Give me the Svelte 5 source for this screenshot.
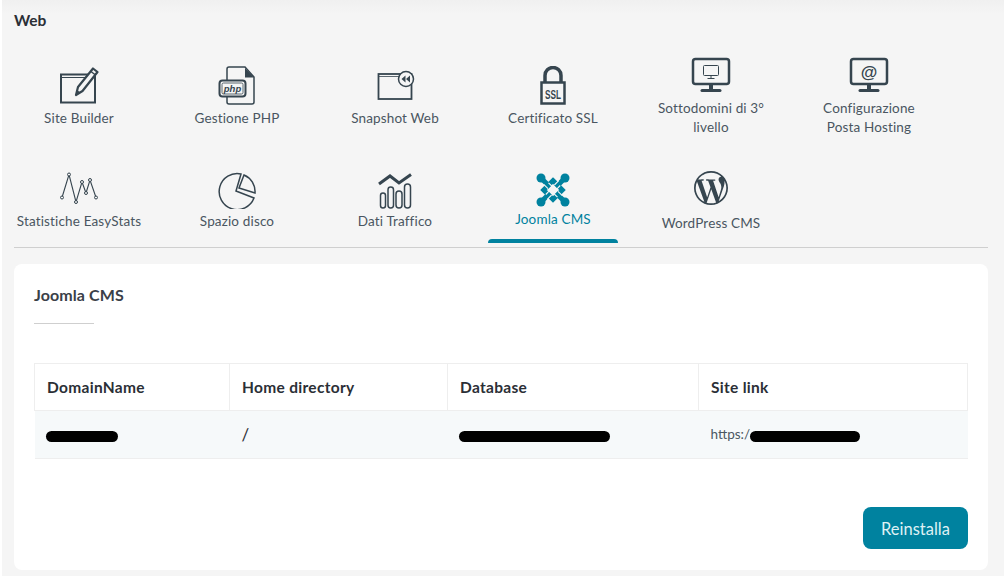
<script>
  const domains = [{ name: 72, home: '/', db: 151, link: 110 }];
  const turns = [0, 90, 180, 270];
</script>

<div class="page">
  <h1>Web</h1>

  <nav class="tabs">
    <a class="tab" href="#a">
      <svg width="40" height="40" viewBox="0 0 40 40" fill="none">
        <rect x="2" y="8.500" width="34" height="28" stroke="#36454f" stroke-width="2" />
        <path d="M3 11.500h30" stroke="#36454f" />
        <path d="M17 29l2-8L34 2.500 38.500 6 23.500 25z" fill="#f5f5f5" stroke="#36454f" stroke-width="2.200" stroke-linejoin="round" />
        <path d="M32 5.500l4.500 3.500" stroke="#36454f" stroke-width="1.500" />
        <path d="M17 29l1-5 3.500 2.500z" fill="#36454f" />
      </svg>
      <span>Site Builder</span>
    </a>

    <a class="tab" href="#b">
      <svg width="40" height="40" viewBox="0 0 40 40" fill="none">
        <path d="M10 14V3a2 2 0 0 1 2-2h16l9 10v25a2 2 0 0 1-2 2H12a2 2 0 0 1-2-2v-5" stroke="#36454f" stroke-width="1.500" />
        <path d="M28 2l9 9.500h-9z" fill="#36454f" />
        <rect x="2.500" y="14.500" width="26" height="16" rx="3" fill="#f5f5f5" stroke="#36454f" stroke-width="2" />
        <rect x="5" y="17" width="21" height="11" rx="1.500" stroke="#36454f" stroke-width=".8" />
        <text x="15.500" y="25.500" class="php">php</text>
      </svg>
      <span>Gestione PHP</span>
    </a>

    <a class="tab" href="#c">
      <svg width="40" height="40" viewBox="0 0 40 40" fill="none">
        <rect x="3.500" y="8" width="33" height="25" stroke="#36454f" stroke-width="1.800" />
        <path d="M4 10.500h27" stroke="#36454f" stroke-width=".8" />
        <circle cx="31" cy="13" r="7.500" fill="#f5f5f5" stroke="#36454f" stroke-width="1.500" />
        <path d="M30.500 9.500v7L26.500 13zM35 9.500v7L31 13z" fill="#36454f" />
      </svg>
      <span>Snapshot Web</span>
    </a>

    <a class="tab" href="#d">
      <svg width="40" height="40" viewBox="0 0 40 40" fill="none">
        <path d="M12 17V10a8 8 0 0 1 16 0v7" stroke="#36454f" stroke-width="3.500" transform="translate(0 -.500)" />
        <rect x="8.500" y="16.500" width="23" height="21" fill="#f5f5f5" stroke="#36454f" stroke-width="2.500" />
        <text x="20" y="33" class="ssl" textLength="16" lengthAdjust="spacingAndGlyphs">SSL</text>
      </svg>
      <span>Certificato SSL</span>
    </a>

    <a class="tab two-line" href="#e">
      <svg width="40" height="36" viewBox="0 0 40 36" fill="none">
        <rect x="2" y="2" width="36" height="25" rx="2.500" stroke="#36454f" stroke-width="2.500" />
        <path d="M20 27v5" stroke="#36454f" stroke-width="4" />
        <path d="M11 33.500h18" stroke="#36454f" stroke-width="3" stroke-linecap="round" />
        <rect x="12.500" y="8.500" width="15" height="10" rx="1" stroke="#36454f" />
        <path d="M20 18.500v2.500M16.500 21.500h7" stroke="#36454f" />
      </svg>
      <span>Sottodomini di 3°<br />livello</span>
    </a>

    <a class="tab two-line" href="#f">
      <svg width="40" height="36" viewBox="0 0 40 36" fill="none">
        <rect x="2" y="2" width="36" height="25" rx="2.500" stroke="#36454f" stroke-width="2.500" />
        <path d="M20 27v5" stroke="#36454f" stroke-width="4" />
        <path d="M11 33.500h18" stroke="#36454f" stroke-width="3" stroke-linecap="round" />
        <text x="20" y="20.500" class="at">@</text>
      </svg>
      <span>Configurazione<br />Posta Hosting</span>
    </a>

    <a class="tab stats" href="#g">
      <svg width="40" height="36" viewBox="0 0 40 36" fill="none">
        <path d="M3 26.500L10 3.500 17 31 23 11 27 22 31 9 37 26.500" stroke="#36454f" stroke-width="1.100" />
        <g fill="#f5f5f5" stroke="#36454f">
          <circle cx="3" cy="26.500" r="1.500" />
          <circle cx="10" cy="3.500" r="1.500" />
          <circle cx="17" cy="31" r="1.500" />
          <circle cx="23" cy="11" r="1.500" />
          <circle cx="27" cy="22" r="1.500" />
          <circle cx="31" cy="9" r="1.500" />
          <circle cx="37" cy="26.500" r="1.500" />
        </g>
      </svg>
      <span>Statistiche EasyStats</span>
    </a>

    <a class="tab" href="#h">
      <svg width="40" height="38" viewBox="0 0 40 38" fill="none" stroke="#36454f" stroke-width="1.500">
        <path d="M19 20L24 3A18 18 0 1 0 37 27z" />
        <path d="M22 17L27 4A18 18 0 0 1 38 22z" />
      </svg>
      <span>Spazio disco</span>
    </a>

    <a class="tab" href="#i">
      <svg width="40" height="38" viewBox="0 0 40 38" fill="none" stroke="#36454f">
        <path d="M4 13L15 5 24 12 36 3.500" stroke-width="3" />
        <rect x="5.500" y="22" width="5" height="15" rx="2.500" stroke-width="1.500" />
        <rect x="13" y="16" width="5.500" height="21" rx="2.700" stroke-width="1.500" />
        <rect x="21" y="20" width="6" height="17" rx="3" stroke-width="1.500" />
        <rect x="29.500" y="13" width="6" height="24" rx="3" stroke-width="1.500" />
      </svg>
      <span>Dati Traffico</span>
    </a>

    <a class="tab active" href="#j">
      <svg width="34" height="34" viewBox="0 0 34 34" fill="none">
        <path d="M17 7.500L26.500 17 17 26.500 7.500 17z" stroke="#00829f" stroke-width="4.600" />
        {#each turns as t}
          <g transform="rotate({t} 17 17)">
            <path d="M5 5L14 14" stroke="#00829f" stroke-width="5" />
            <circle cx="5" cy="5" r="4.500" fill="#00829f" />
            <path d="M7.700 11.300L12 15.600M12.500 9.800L15.800 13" stroke="#f5f5f5" stroke-width="1.100" />
          </g>
        {/each}
      </svg>
      <span>Joomla CMS</span>
    </a>

    <a class="tab wp" href="#k">
      <svg width="34" height="34" viewBox="0 0 24 24" fill="#36454f">
        <path d="M21.469 6.825c.84 1.537 1.318 3.3 1.318 5.175 0 3.979-2.156 7.456-5.363 9.325l3.295-9.527c.615-1.54.82-2.771.82-3.864 0-.405-.026-.78-.07-1.11m-7.981.105c.647-.03 1.232-.105 1.232-.105.582-.075.514-.93-.067-.899 0 0-1.755.135-2.88.135-1.064 0-2.85-.15-2.85-.15-.585-.03-.661.855-.075.885 0 0 .54.061 1.125.09l1.68 4.605-2.37 7.08L5.354 6.9c.649-.03 1.234-.1 1.234-.1.585-.075.516-.93-.065-.896 0 0-1.746.138-2.874.138-.2 0-.438-.008-.69-.015C4.911 3.15 8.235 1.215 12 1.215c2.809 0 5.365 1.072 7.286 2.833-.046-.003-.091-.009-.141-.009-1.06 0-1.812.923-1.812 1.914 0 .89.513 1.643 1.06 2.531.411.72.89 1.643.89 2.977 0 .915-.354 1.994-.821 3.479l-1.075 3.585-3.9-11.61.001.014zM12 22.784c-1.059 0-2.081-.153-3.048-.437l3.237-9.406 3.315 9.087c.024.053.05.101.078.149-1.12.393-2.325.609-3.582.609M1.211 12c0-1.564.336-3.05.935-4.39L7.29 21.709C3.694 19.96 1.212 16.271 1.211 12M12 0C5.385 0 0 5.385 0 12s5.385 12 12 12 12-5.385 12-12S18.615 0 12 0" />
      </svg>
      <span>WordPress CMS</span>
    </a>
  </nav>

  <section class="card">
    <h2>Joomla CMS</h2>
    <div class="rule"></div>

    <table>
      <thead>
        <tr>
          <th>DomainName</th>
          <th>Home directory</th>
          <th>Database</th>
          <th>Site link</th>
        </tr>
      </thead>
      <tbody>
        {#each domains as d}
          <tr>
            <td><i class="hidden first" style="width: {d.name}px"></i></td>
            <td class="home">{d.home}</td>
            <td><i class="hidden first" style="width: {d.db}px"></i></td>
            <td>https:/<i class="hidden" style="width: {d.link}px"></i></td>
          </tr>
        {/each}
      </tbody>
    </table>

    <div class="actions">
      <button type="button">Reinstalla</button>
    </div>
  </section>
</div>

<style>
  :global(body) {
    background: #fff;
  }

  .page {
    box-sizing: border-box;
    height: 576px;
    margin-left: 2px;
    padding: 11px 16px 0 12px;
    overflow: hidden;
    background: linear-gradient(#f0f0f0, #f5f5f5 14px);
    font-family: Lato, "Open Sans", sans-serif;
    color: #4a5661;
  }

  h1 {
    margin: 0;
    font-size: 15.500px;
    line-height: 18px;
    font-weight: 700;
    color: #2b2f36;
  }

  .tabs {
    display: flex;
    flex-wrap: wrap;
    gap: 19px 28px;
    margin-top: 25px;
    padding-bottom: 4px;
    border-bottom: 1px solid #cfcfcf;
  }

  .tab {
    position: relative;
    display: flex;
    flex-direction: column;
    align-items: center;
    justify-content: center;
    width: 130px;
    height: 85px;
    color: inherit;
    text-decoration: none;
    text-align: center;
    font-size: 13.500px;
    line-height: 19px;
    letter-spacing: .15px;
  }

  .tab svg {
    display: block;
    margin-bottom: 3px;
  }

  .two-line svg {
    margin-bottom: 6px;
  }

  .stats svg {
    margin-bottom: 5px;
  }

  .wp {
    padding-top: 2px;
    box-sizing: border-box;
  }

  .wp svg {
    margin-bottom: 9px;
  }

  .active {
    color: #00829f;
  }

  .active::after {
    content: "";
    position: absolute;
    left: 0;
    right: 0;
    bottom: 0;
    height: 4px;
    border-radius: 4px 4px 0 0;
    background: #00829f;
  }

  .php {
    font: italic 700 9.500px "Liberation Sans", sans-serif;
    letter-spacing: 0;
    fill: #36454f;
    text-anchor: middle;
  }

  .ssl {
    font: 700 12px "Liberation Sans", sans-serif;
    letter-spacing: 0;
    fill: #36454f;
    text-anchor: middle;
  }

  .at {
    font: 700 17px "Liberation Sans", sans-serif;
    letter-spacing: 0;
    fill: #36454f;
    text-anchor: middle;
  }

  .card {
    box-sizing: border-box;
    height: 306px;
    margin-top: 16px;
    padding: 22px 20px 0;
    border-radius: 8px;
    background: #fff;
  }

  h2 {
    margin: 0;
    font-size: 16px;
    line-height: 18px;
    font-weight: 700;
    letter-spacing: .1px;
    color: #3a4048;
  }

  .rule {
    width: 60px;
    height: 1px;
    margin-top: 19px;
    background: #cfcfcf;
  }

  table {
    width: 934px;
    margin-top: 39px;
    border-collapse: collapse;
    table-layout: fixed;
    font-size: 13.500px;
  }

  th {
    box-sizing: border-box;
    height: 47px;
    padding: 0 12px;
    border: 1px solid #eeeeee;
    text-align: left;
    font-size: 15.500px;
    font-weight: 700;
    letter-spacing: .3px;
    color: #2b2f36;
  }

  th:nth-child(1) { width: 195px; }
  th:nth-child(2) { width: 218px; }
  th:nth-child(3) { width: 251px; }

  td {
    box-sizing: border-box;
    height: 48px;
    padding: 0 12px 2px;
    border-bottom: 1px solid #eeeeee;
    background: #f6f9fa;
  }

  .home {
    padding-bottom: 0;
    font-size: 17px;
    color: #2b2f36;
  }

  .hidden {
    display: inline-block;
    height: 11px;
    border-radius: 6px;
    background: #000;
    vertical-align: -3px;
  }

  .first {
    margin-left: -1px;
  }

  .actions {
    display: flex;
    justify-content: flex-end;
    margin-top: 48px;
  }

  button {
    width: 105px;
    height: 42px;
    padding-top: 2px;
    border: 0;
    border-radius: 8px;
    background: #00829f;
    color: #dff1f5;
    font: inherit;
    font-size: 16.500px;
  }
</style>
